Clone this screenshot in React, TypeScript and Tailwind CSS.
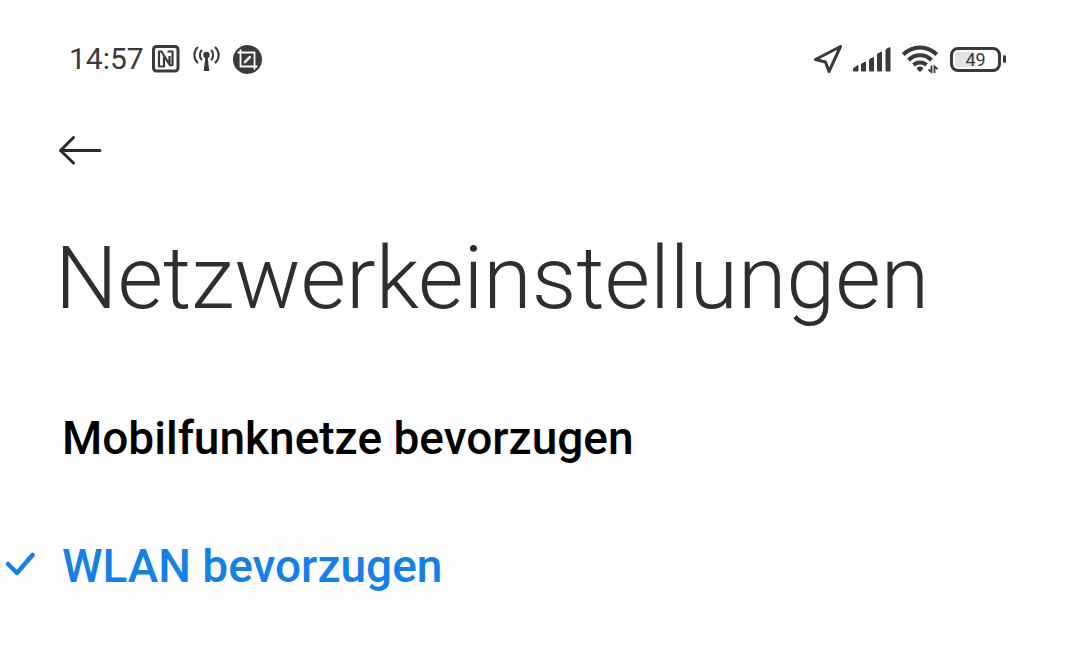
import React, { useState } from 'react';

const NfcIcon = () => (
  <svg className="size-7" viewBox="0 0 28 28" fill="none" stroke="currentColor" strokeLinejoin="round" aria-hidden="true">
    <rect x="1.5" y="1.5" width="24.5" height="24.5" rx="3" strokeWidth="3" />
    <path d="M7 22V6.5H9.5L17.5 19.500V11" strokeWidth="2.2" />
    <path d="M7 21.500H12V12M15.500 6.500H20.500V20L17.500 20.500" strokeWidth="2.200" />
  </svg>
);

const HotspotIcon = () => (
  <svg className="h-7 w-[27px]" viewBox="0 0 27 28" fill="none" stroke="currentColor" strokeWidth="2" strokeLinecap="round" aria-hidden="true">
    <circle cx="13.5" cy="10" r="3.2" fill="currentColor" stroke="none" />
    <path d="M12.5 11H14.5L16.3 26H10.7Z" fill="currentColor" stroke="none" />
    <path d="M8.5 14.5C6.3 12 6.3 8 8.5 5.5M18.5 14.5C20.7 12 20.7 8 18.5 5.5" />
    <path d="M4.5 17.5C.3 13.5.3 6.5 4.5 2.5M22.5 17.5C26.7 13.5 26.7 6.5 22.5 2.5" />
  </svg>
);

const CropIcon = () => (
  <svg className="size-[29px]" viewBox="0 0 29 29" fill="none" aria-hidden="true">
    <circle cx="14.5" cy="14.5" r="14.5" fill="currentColor" />
    <path d="M7.5 4.5V21.5H24.5M4.5 7.5H21.5V24.5" stroke="white" strokeWidth="1.8" />
    <path d="M12 17L16.8 12.2" stroke="white" strokeWidth="2.6" strokeLinecap="round" />
  </svg>
);

const LocationIcon = () => (
  <svg className="h-[30px] w-[29px]" viewBox="0 0 29 30" fill="none" stroke="currentColor" strokeWidth="3" strokeLinejoin="round" aria-hidden="true">
    <path d="M27.5 2.5L2.5 15.5L12.5 18L16 27.5Z" />
  </svg>
);

const SignalIcon = () => (
  <svg className="h-[26px] w-[38px]" viewBox="0 0 38 26" fill="currentColor" stroke="currentColor" strokeWidth="1" strokeLinejoin="round" aria-hidden="true">
    <path d="M.5 25V22.5L5 19.5V25ZM8.5 18L12.5 16V25H8.5ZM16.5 13.5L20.5 11.5V25H16.5ZM24.5 8L28.5 6V25H24.5ZM33 3.5L37 1.5V25H33Z" />
  </svg>
);

const WifiIcon = () => (
  <svg className="h-[30px] w-[37px]" viewBox="0 0 37 30" fill="none" stroke="currentColor" strokeWidth="4" aria-hidden="true">
    <path d="M1.3 10.5C10.5 1 25.5 1 34.7 10.5" />
    <path d="M6.5 16C13 9.5 23 9.5 29.5 16" />
    <path d="M11.5 21C15 17.5 21 17.5 24.5 21" />
    <path d="M14.8 24C16.5 22 19.5 22 21.2 24Q21.5 25 18 28Q14.5 25 14.8 24Z" fill="currentColor" stroke="none" />
    <path d="M29.5 21.5V28L26.5 25.5M32.5 29V22.5L35.5 25" strokeWidth="1.8" />
  </svg>
);

const Battery = ({ level }: { level: number }) => (
  <div className="flex items-center gap-0.5">
    <div className="flex h-[25px] w-[51px] rounded-lg border-3 p-0.5">
      <div className="grid flex-1 grid-rows-1">
        <div className="col-start-1 row-start-1 rounded-xs bg-[#e2e2e2]" style={{ width: `${level}%` }} />
        <span className="col-start-1 row-start-1 text-center text-[18px] leading-4">{level}</span>
      </div>
    </div>
    <div className="h-2 w-[3px] rounded-sm bg-current" />
  </div>
);

const StatusBar = () => (
  <div className="flex h-[118px] items-center justify-between pr-[74px] pl-[69px] text-[#3a3a3a]">
    <div className="flex items-center">
      <span className="mr-2 text-[30px] leading-9">14:57</span>
      <div className="flex items-center gap-[13px]">
        <NfcIcon />
        <HotspotIcon />
        <CropIcon />
      </div>
    </div>
    <div className="flex items-center gap-[11px]">
      <LocationIcon />
      <SignalIcon />
      <WifiIcon />
      <Battery level={49} />
    </div>
  </div>
);

const options = [
  { id: 'mobile', label: 'Mobilfunknetze bevorzugen' },
  { id: 'wlan', label: 'WLAN bevorzugen' },
];

export default function App() {
  const [selected, setSelected] = useState('wlan');

  return (
    <div className="min-h-screen w-full bg-[#fefefe] font-['Roboto',sans-serif]">
      <StatusBar />

      <header className="flex h-16 items-center pl-[58px]">
        <button type="button" aria-label="Zurück" className="text-[#2b2b2b]">
          <svg className="h-8 w-11" viewBox="0 0 44 32" fill="none" stroke="currentColor" strokeWidth="3" strokeLinecap="round" strokeLinejoin="round">
            <path d="M42 16.5H2.5M15.5 3.5L2.5 16.5L15.5 29" />
          </svg>
        </button>
      </header>

      <h1 className="mt-11 mb-11 pl-[55px] text-[88px] leading-[104px] font-light text-[#2e2e2e]">
        Netzwerkeinstellungen
      </h1>

      <div role="radiogroup" aria-label="Netzwerkeinstellungen">
        {options.map((option) => (
          <label
            key={option.id}
            className={`flex h-32 cursor-pointer items-center text-[46px] leading-[56px] font-medium ${
              selected === option.id ? 'text-[#1480e8]' : 'text-black'
            }`}
          >
            <input
              type="radio"
              name="network"
              value={option.id}
              checked={selected === option.id}
              onChange={() => setSelected(option.id)}
              className="size-0 appearance-none"
            />
            <span className="flex w-[62px] shrink-0 pl-1">
              {selected === option.id && (
                <svg className="h-7 w-8" viewBox="0 0 32 28" fill="none" stroke="currentColor" strokeWidth="4.5" strokeLinecap="round" strokeLinejoin="round" aria-hidden="true">
                  <path d="M4 12L13 21L28.5 3" />
                </svg>
              )}
            </span>
            {option.label}
          </label>
        ))}
      </div>
    </div>
  );
}
